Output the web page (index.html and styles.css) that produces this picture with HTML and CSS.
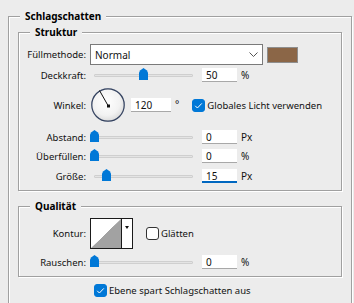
FILE: index.html
```html
<!DOCTYPE html>
<html lang="de">
<head>
    <meta charset="UTF-8">
    <meta name="viewport" content="width=device-width, initial-scale=1.0">
    <title>Schlagschatten</title>
    <link rel="stylesheet" href="styles.css">
</head>
<body>

<section class="group outer">
    <h1 class="group-title">Schlagschatten</h1>

    <section class="group inner">
        <h2 class="group-title">Struktur</h2>

        <div class="row row-select">
            <span class="label">Füllmethode:</span>
            <div class="select">
                <span>Normal</span>
                <svg width="9" height="6" viewBox="0 0 9 6"><path d="M0.5 0.5 L4.5 4.5 L8.5 0.5" fill="none" stroke="#555" stroke-width="1"/></svg>
            </div>
            <span class="swatch"></span>
        </div>

        <div class="row row-deck">
            <span class="label">Deckkraft:</span>
            <div class="slider"><span class="thumb" style="left:49px"></span></div>
            <span class="field">50</span>
            <span class="unit">%</span>
        </div>

        <div class="row row-angle">
            <span class="label">Winkel:</span>
            <svg class="dial" width="36" height="36" viewBox="0 0 36 36">
                <defs>
                    <radialGradient id="dialFill" cx="45%" cy="40%" r="60%">
                        <stop offset="0" stop-color="#ffffff"/>
                        <stop offset="0.7" stop-color="#f2f2f2"/>
                        <stop offset="1" stop-color="#dcdcdc"/>
                    </radialGradient>
                </defs>
                <circle cx="18" cy="18" r="17" fill="#c9ced8"/>
                <circle cx="18" cy="18" r="16.2" fill="url(#dialFill)" stroke="#34425f" stroke-width="1.2"/>
                <line x1="18" y1="18.5" x2="9.5" y2="3.5" stroke="#111" stroke-width="1"/>
                <rect x="17" y="17.5" width="3" height="3" fill="#111"/>
            </svg>
            <span class="field field-wide">120</span>
            <span class="unit unit-deg">°</span>
            <span class="check checked"></span>
            <span class="check-label">Globales Licht verwenden</span>
        </div>

        <div class="row row-abstand">
            <span class="label">Abstand:</span>
            <div class="slider"><span class="thumb" style="left:0px"></span></div>
            <span class="field">0</span>
            <span class="unit">Px</span>
        </div>

        <div class="row row-choke">
            <span class="label">Überfüllen:</span>
            <div class="slider"><span class="thumb" style="left:0px"></span></div>
            <span class="field">0</span>
            <span class="unit">%</span>
        </div>

        <div class="row row-size">
            <span class="label">Größe:</span>
            <div class="slider"><span class="thumb" style="left:12px"></span></div>
            <span class="field focused">15</span>
            <span class="unit">Px</span>
        </div>
    </section>

    <section class="group inner quality">
        <h2 class="group-title">Qualität</h2>

        <div class="row row-contour">
            <span class="label">Kontur:</span>
            <div class="contour">
                <span class="contour-preview"></span>
                <span class="contour-arrow"></span>
            </div>
            <span class="check check-smooth"></span>
            <span class="check-label">Glätten</span>
        </div>

        <div class="row row-noise">
            <span class="label">Rauschen:</span>
            <div class="slider"><span class="thumb" style="left:0px"></span></div>
            <span class="field">0</span>
            <span class="unit">%</span>
        </div>
    </section>

    <div class="row row-knockout">
        <span class="check checked"></span>
        <span class="check-label">Ebene spart Schlagschatten aus</span>
    </div>
</section>

</body>
</html>
```

FILE: styles.css
```css
body {
    margin: 0;
    background: #ececec;
    color: #111;
    font-family: "Noto Sans", "Open Sans", sans-serif;
    font-size: 9.5px;
}
.group {
    box-sizing: border-box;
    border: 1px solid #a0a0a0;
    box-shadow: inset 1px 1px 0 #fff, 1px 1px 0 #fff;
}
.group-title {
    width: fit-content;
    margin: -8px 0 0 11px;
    padding: 0 5px;
    background: #ececec;
    color: #000;
    font-size: 10px;
    font-weight: bold;
    line-height: 15px;
}
.outer {
    width: 344px;
    margin: 16px 0 0 8px;
    padding-bottom: 14px;
}
.inner {
    margin: 8px 9px 0;
    padding-bottom: 6px;
}
.quality {
    margin-top: 15px;
}
.row {
    display: flex;
    align-items: center;
    height: 16px;
}
.label {
    width: 67px;
    margin-right: 4px;
    text-align: right;
    white-space: nowrap;
}
.row-select {
    height: 21px;
    margin-top: 4px;
}
.row-deck {
    margin-top: 2px;
}
.row-angle {
    height: 36px;
    margin-top: 4px;
}
.row-abstand {
    margin-top: 6px;
}
.row-choke {
    margin-top: 3px;
}
.row-size {
    margin-top: 4px;
}
.row-contour {
    height: 31px;
    margin-top: 4px;
}
.row-noise {
    margin-top: 5px;
}
.row-knockout {
    margin-top: 5px;
    padding-left: 85px;
}

.select {
    box-sizing: border-box;
    width: 173px;
    height: 21px;
    display: flex;
    align-items: center;
    justify-content: space-between;
    padding: 0 4px 0 4px;
    background: #fff;
    border: 1px solid #7a7a7a;
    font-size: 10px;
}
.swatch {
    box-sizing: border-box;
    width: 31px;
    height: 16px;
    margin-left: 4px;
    background: #8b6647;
    border: 1px solid #8e8e8e;
}

.slider {
    position: relative;
    width: 108px;
    height: 16px;
}
.slider::before {
    content: "";
    position: absolute;
    left: 4px;
    right: 5px;
    top: 7px;
    height: 3px;
    box-sizing: border-box;
    background: #e4e4e4;
    border: 1px solid #cfcfcf;
    border-radius: 1px;
}
.thumb {
    position: absolute;
    top: 1px;
    width: 9px;
    height: 12px;
    background: #0078d7;
    clip-path: polygon(50% 0, 85% 18%, 100% 38%, 100% 100%, 0 100%, 0 38%, 15% 18%);
}

.field {
    box-sizing: border-box;
    width: 35px;
    height: 14px;
    margin-left: 4px;
    padding-left: 4px;
    background: #fff;
    border-bottom: 1px solid #a8a8a8;
    font-size: 10px;
    line-height: 14px;
}
.field-wide {
    width: 40px;
    margin-left: 5px;
}
.focused {
    border-bottom: 2px solid #0067c0;
}
.unit {
    margin-left: 4px;
    font-size: 10px;
}
.unit-deg {
    align-self: flex-start;
    margin-top: 10px;
}
.dial {
    display: block;
}

.check {
    box-sizing: border-box;
    width: 13px;
    height: 13px;
    margin-left: 13px;
    margin-right: 2px;
    border-radius: 3px;
    background: #fff;
    border: 1px solid #333;
}
.checked {
    background: #0078d7 url("data:image/svg+xml,%3Csvg xmlns='http://www.w3.org/2000/svg' width='13' height='13'%3E%3Cpath d='M3.2 6.8 L5.4 9 L9.8 4.4' fill='none' stroke='white' stroke-width='1'/%3E%3C/svg%3E") center / 13px 13px no-repeat;
    border-color: #0078d7;
}
.row-knockout .check {
    margin-left: 0;
}
.check-label {
    white-space: nowrap;
}

.contour {
    box-sizing: border-box;
    display: flex;
    width: 43px;
    height: 31px;
    border: 1px solid #1a1a1a;
}
.contour-preview {
    width: 30px;
    background: linear-gradient(to bottom right, #fff 49.5%, #a2a2a2 50.5%);
}
.contour-arrow {
    position: relative;
    flex: 1;
    background: #fff;
    border-left: 1px solid #1a1a1a;
}
.contour-arrow::after {
    content: "";
    position: absolute;
    left: 3px;
    top: 7px;
    border-left: 2.5px solid transparent;
    border-right: 2.5px solid transparent;
    border-top: 3px solid #111;
}
```
